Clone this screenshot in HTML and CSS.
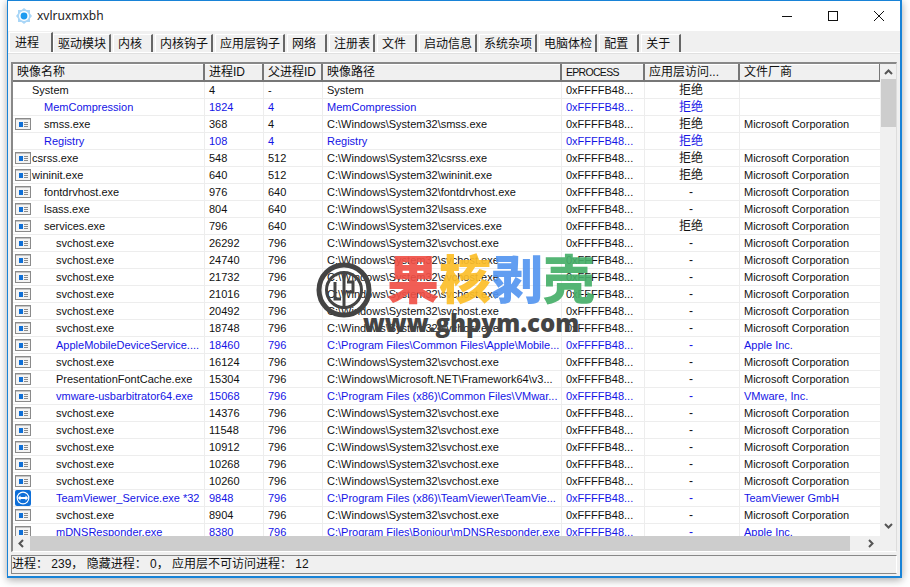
FILE: index.html
```html
<!DOCTYPE html>
<html lang="zh-CN">
<head>
  <meta charset="utf-8">
  <meta name="viewport" content="width=device-width, initial-scale=1">
  <title>xvlruxmxbh</title>
  <link rel="stylesheet" href="styles.css">
</head>
<body>

  <svg class="defs" width="0" height="0">
    <symbol id="appIcon" viewBox="0 0 16 12">
      <rect x="0.5" y="0.5" width="15" height="11" fill="#f4f4f4" stroke="#8a8a8a"/>
      <rect x="1" y="1" width="14" height="1" fill="#c4c4c4"/>
      <rect x="4" y="4" width="4" height="5" fill="#0f6fd6"/>
      <rect x="9" y="4" width="4" height="1" fill="#8a8a8a"/>
      <rect x="9" y="6" width="4" height="1" fill="#8a8a8a"/>
      <rect x="9" y="8" width="4" height="1" fill="#8a8a8a"/>
    </symbol>
  </svg>

  <div class="window">

    <div class="titleBar">
      <svg class="appLogo" width="16" height="16" viewBox="0 0 16 16">
        <path d="M8 0 L10.5 2 L14 2 L14 5.5 L16 8 L14 10.5 L14 14 L10.5 14 L8 16 L5.5 14 L2 14 L2 10.5 L0 8 L2 5.5 L2 2 L5.5 2 Z" fill="#a9d6f7"/>
        <circle cx="8" cy="8" r="5" fill="#fff"/>
        <circle cx="8" cy="8" r="3.4" fill="#1e9bf0"/>
      </svg>
      <span class="titleText">xvlruxmxbh</span>
      <div class="winButtons">
        <svg width="12" height="12" viewBox="0 0 12 12"><path d="M1 6.5 H11" stroke="#111" fill="none"/></svg>
        <svg width="12" height="12" viewBox="0 0 12 12"><rect x="1.5" y="1.5" width="9" height="9" stroke="#111" fill="none"/></svg>
        <svg width="12" height="12" viewBox="0 0 12 12"><path d="M1 1 L11 11 M11 1 L1 11" stroke="#111" fill="none"/></svg>
      </div>
    </div>

    <div class="tabs">
      <div class="tab active">进程</div>
      <div class="tab">驱动模块</div>
      <div class="tab">内核</div>
      <div class="tab">内核钩子</div>
      <div class="tab">应用层钩子</div>
      <div class="tab">网络</div>
      <div class="tab">注册表</div>
      <div class="tab">文件</div>
      <div class="tab">启动信息</div>
      <div class="tab">系统杂项</div>
      <div class="tab">电脑体检</div>
      <div class="tab">配置</div>
      <div class="tab">关于</div>
    </div>

    <div class="panel">
      <div class="listBox">
        <div class="listMain">
          <div class="listClip">
            <table class="procTable">
              <colgroup>
                <col class="colName"><col class="colPid"><col class="colPpid"><col class="colPath"><col class="colEproc"><col class="colAccess"><col class="colVendor">
              </colgroup>
              <thead>
                <tr><th>映像名称</th><th>进程ID</th><th>父进程ID</th><th>映像路径</th><th class="thEproc">EPROCESS</th><th>应用层访问...</th><th>文件厂商</th></tr>
              </thead>
              <tbody>
                <tr><td class="lvl1">System</td><td>4</td><td>-</td><td>System</td><td>0xFFFFB48...</td><td class="mid">拒绝</td><td></td></tr>
                <tr class="blue"><td class="lvl2">MemCompression</td><td>1824</td><td>4</td><td>MemCompression</td><td>0xFFFFB48...</td><td class="mid">拒绝</td><td></td></tr>
                <tr><td class="lvl2"><svg class="ico"><use href="#appIcon"/></svg>smss.exe</td><td>368</td><td>4</td><td>C:\Windows\System32\smss.exe</td><td>0xFFFFB48...</td><td class="mid">拒绝</td><td>Microsoft Corporation</td></tr>
                <tr class="blue"><td class="lvl2">Registry</td><td>108</td><td>4</td><td>Registry</td><td>0xFFFFB48...</td><td class="mid">拒绝</td><td></td></tr>
                <tr><td class="lvl1"><svg class="ico"><use href="#appIcon"/></svg>csrss.exe</td><td>548</td><td>512</td><td>C:\Windows\System32\csrss.exe</td><td>0xFFFFB48...</td><td class="mid">拒绝</td><td>Microsoft Corporation</td></tr>
                <tr><td class="lvl1"><svg class="ico"><use href="#appIcon"/></svg>wininit.exe</td><td>640</td><td>512</td><td>C:\Windows\System32\wininit.exe</td><td>0xFFFFB48...</td><td class="mid">拒绝</td><td>Microsoft Corporation</td></tr>
                <tr><td class="lvl2"><svg class="ico"><use href="#appIcon"/></svg>fontdrvhost.exe</td><td>976</td><td>640</td><td>C:\Windows\System32\fontdrvhost.exe</td><td>0xFFFFB48...</td><td class="mid">-</td><td>Microsoft Corporation</td></tr>
                <tr><td class="lvl2"><svg class="ico"><use href="#appIcon"/></svg>lsass.exe</td><td>804</td><td>640</td><td>C:\Windows\System32\lsass.exe</td><td>0xFFFFB48...</td><td class="mid">-</td><td>Microsoft Corporation</td></tr>
                <tr><td class="lvl2"><svg class="ico"><use href="#appIcon"/></svg>services.exe</td><td>796</td><td>640</td><td>C:\Windows\System32\services.exe</td><td>0xFFFFB48...</td><td class="mid">拒绝</td><td>Microsoft Corporation</td></tr>
                <tr><td class="lvl3"><svg class="ico"><use href="#appIcon"/></svg>svchost.exe</td><td>26292</td><td>796</td><td>C:\Windows\System32\svchost.exe</td><td>0xFFFFB48...</td><td class="mid">-</td><td>Microsoft Corporation</td></tr>
                <tr><td class="lvl3"><svg class="ico"><use href="#appIcon"/></svg>svchost.exe</td><td>24740</td><td>796</td><td>C:\Windows\System32\svchost.exe</td><td>0xFFFFB48...</td><td class="mid">-</td><td>Microsoft Corporation</td></tr>
                <tr><td class="lvl3"><svg class="ico"><use href="#appIcon"/></svg>svchost.exe</td><td>21732</td><td>796</td><td>C:\Windows\System32\svchost.exe</td><td>0xFFFFB48...</td><td class="mid">-</td><td>Microsoft Corporation</td></tr>
                <tr><td class="lvl3"><svg class="ico"><use href="#appIcon"/></svg>svchost.exe</td><td>21016</td><td>796</td><td>C:\Windows\System32\svchost.exe</td><td>0xFFFFB48...</td><td class="mid">-</td><td>Microsoft Corporation</td></tr>
                <tr><td class="lvl3"><svg class="ico"><use href="#appIcon"/></svg>svchost.exe</td><td>20492</td><td>796</td><td>C:\Windows\System32\svchost.exe</td><td>0xFFFFB48...</td><td class="mid">-</td><td>Microsoft Corporation</td></tr>
                <tr><td class="lvl3"><svg class="ico"><use href="#appIcon"/></svg>svchost.exe</td><td>18748</td><td>796</td><td>C:\Windows\System32\svchost.exe</td><td>0xFFFFB48...</td><td class="mid">-</td><td>Microsoft Corporation</td></tr>
                <tr class="blue"><td class="lvl3"><svg class="ico"><use href="#appIcon"/></svg>AppleMobileDeviceService....</td><td>18460</td><td>796</td><td>C:\Program Files\Common Files\Apple\Mobile...</td><td>0xFFFFB48...</td><td class="mid">-</td><td>Apple Inc.</td></tr>
                <tr><td class="lvl3"><svg class="ico"><use href="#appIcon"/></svg>svchost.exe</td><td>16124</td><td>796</td><td>C:\Windows\System32\svchost.exe</td><td>0xFFFFB48...</td><td class="mid">-</td><td>Microsoft Corporation</td></tr>
                <tr><td class="lvl3"><svg class="ico"><use href="#appIcon"/></svg>PresentationFontCache.exe</td><td>15304</td><td>796</td><td>C:\Windows\Microsoft.NET\Framework64\v3...</td><td>0xFFFFB48...</td><td class="mid">-</td><td>Microsoft Corporation</td></tr>
                <tr class="blue"><td class="lvl3"><svg class="ico"><use href="#appIcon"/></svg>vmware-usbarbitrator64.exe</td><td>15068</td><td>796</td><td>C:\Program Files (x86)\Common Files\VMwar...</td><td>0xFFFFB48...</td><td class="mid">-</td><td>VMware, Inc.</td></tr>
                <tr><td class="lvl3"><svg class="ico"><use href="#appIcon"/></svg>svchost.exe</td><td>14376</td><td>796</td><td>C:\Windows\System32\svchost.exe</td><td>0xFFFFB48...</td><td class="mid">-</td><td>Microsoft Corporation</td></tr>
                <tr><td class="lvl3"><svg class="ico"><use href="#appIcon"/></svg>svchost.exe</td><td>11548</td><td>796</td><td>C:\Windows\System32\svchost.exe</td><td>0xFFFFB48...</td><td class="mid">-</td><td>Microsoft Corporation</td></tr>
                <tr><td class="lvl3"><svg class="ico"><use href="#appIcon"/></svg>svchost.exe</td><td>10912</td><td>796</td><td>C:\Windows\System32\svchost.exe</td><td>0xFFFFB48...</td><td class="mid">-</td><td>Microsoft Corporation</td></tr>
                <tr><td class="lvl3"><svg class="ico"><use href="#appIcon"/></svg>svchost.exe</td><td>10268</td><td>796</td><td>C:\Windows\System32\svchost.exe</td><td>0xFFFFB48...</td><td class="mid">-</td><td>Microsoft Corporation</td></tr>
                <tr><td class="lvl3"><svg class="ico"><use href="#appIcon"/></svg>svchost.exe</td><td>10260</td><td>796</td><td>C:\Windows\System32\svchost.exe</td><td>0xFFFFB48...</td><td class="mid">-</td><td>Microsoft Corporation</td></tr>
                <tr class="blue"><td class="lvl3"><svg class="ico tv" viewBox="0 0 16 16"><rect width="16" height="16" rx="2" fill="#0e6fd8"/><circle cx="8" cy="8" r="6.4" fill="#fff"/><circle cx="8" cy="8" r="5.2" fill="#0e6fd8"/><path d="M2.8 8 L5.5 5.6 V7 H10.5 V5.6 L13.2 8 L10.5 10.4 V9 H5.5 V10.4 Z" fill="#fff"/></svg>TeamViewer_Service.exe *32</td><td>9848</td><td>796</td><td>C:\Program Files (x86)\TeamViewer\TeamVie...</td><td>0xFFFFB48...</td><td class="mid">-</td><td>TeamViewer GmbH</td></tr>
                <tr><td class="lvl3"><svg class="ico"><use href="#appIcon"/></svg>svchost.exe</td><td>8904</td><td>796</td><td>C:\Windows\System32\svchost.exe</td><td>0xFFFFB48...</td><td class="mid">-</td><td>Microsoft Corporation</td></tr>
                <tr class="blue"><td class="lvl3"><svg class="ico"><use href="#appIcon"/></svg>mDNSResponder.exe</td><td>8380</td><td>796</td><td>C:\Program Files\Bonjour\mDNSResponder.exe</td><td>0xFFFFB48...</td><td class="mid">-</td><td>Apple Inc.</td></tr>
              </tbody>
            </table>
          </div>
          <div class="vScroll">
            <svg width="9" height="6" viewBox="0 0 9 6"><path d="M1 5 L4.5 1.5 L8 5" stroke="#555" stroke-width="2" fill="none"/></svg>
            <div class="vThumb"></div>
            <svg class="downArrow" width="9" height="6" viewBox="0 0 9 6"><path d="M1 1 L4.5 4.5 L8 1" stroke="#555" stroke-width="2" fill="none"/></svg>
          </div>
        </div>
        <div class="hScroll">
          <svg width="6" height="9" viewBox="0 0 6 9"><path d="M5 1 L1.5 4.5 L5 8" stroke="#555" stroke-width="2" fill="none"/></svg>
          <div class="hThumb"></div>
          <svg width="6" height="9" viewBox="0 0 6 9"><path d="M1 1 L4.5 4.5 L1 8" stroke="#555" stroke-width="2" fill="none"/></svg>
        </div>
      </div>
    </div>

    <div class="statusBar">进程： 239， 隐藏进程： 0， 应用层不可访问进程： 12</div>

    <div class="watermark">
      <svg class="wmLogo" width="56" height="56" viewBox="0 0 56 56">
        <circle cx="28" cy="28" r="25" fill="none" stroke="#444" stroke-width="5"/>
        <circle cx="28" cy="28" r="17.5" fill="none" stroke="#444" stroke-width="3"/>
        <path d="M28 11 V45 M19 20 V37 H25 M31 20 H37 V30 H31" fill="none" stroke="#444" stroke-width="3"/>
      </svg>
      <div class="wmBrand"><span class="wmRed">果</span><span class="wmYellow">核</span><span class="wmBlue">剥</span><span class="wmGreen">壳</span></div>
      <div class="wmUrl">www.ghpym.com</div>
    </div>

  </div>

</body>
</html>
```

FILE: styles.css
```css
html, body {
  margin: 0;
  height: 100%;
  overflow: hidden;
}

body {
  background: #fff;
  font-family: "Liberation Sans", "Noto Sans CJK SC", sans-serif;
  font-size: 11px;
  color: #111;
}

.defs {
  display: block;
  height: 0;
}

.window {
  position: relative;
  box-sizing: border-box;
  display: flex;
  flex-direction: column;
  width: 895px;
  height: 578px;
  margin-left: 7px;
  background: #f0f0f0;
  border: 1px solid #1883d7;
  border-right-width: 2px;
  border-bottom-width: 2px;
  box-shadow: 0 2px 8px rgba(0, 0, 0, 0.35);
}

/* title bar */
.titleBar {
  display: flex;
  align-items: center;
  height: 30px;
  flex: none;
  background: #fff;
  padding-left: 8px;
}

.appLogo {
  margin-right: 5px;
}

.titleText {
  font-family: "Noto Sans", sans-serif;
  font-size: 12px;
  color: #222;
  margin-top: -1px;
}

.winButtons {
  display: flex;
  gap: 34px;
  margin-left: auto;
  margin-right: 15px;
  margin-top: -1px;
}

/* tabs */
.tabs {
  display: flex;
  align-items: flex-end;
  gap: 2px;
  height: 21px;
  flex: none;
  padding-left: 1px;
  font-size: 12px;
}

.tab {
  box-sizing: border-box;
  height: 18px;
  line-height: 19px;
  padding: 0 3px 0 4px;
  min-width: 40px;
  border-top: 1px solid #fff;
  border-left: 1px solid #fff;
  border-right: 2px solid #666;
}

.tab.active {
  height: 20px;
  line-height: 20px;
  margin-right: -2px;
  padding: 0 12px 0 5px;
  background: #f0f0f0;
}

/* process list */
.panel {
  flex: 1;
  min-height: 0;
  display: flex;
  padding: 9px 3px 3px 3px;
  border-top: 1px solid #fff;
  box-shadow: inset 0 1px 0 #e0e0e0;
}

.listBox {
  flex: 1;
  min-width: 0;
  display: flex;
  flex-direction: column;
  border-top: 2px solid #888;
  border-left: 2px solid #888;
  border-right: 1px solid #ddd;
  border-bottom: 1px solid #fff;
}

.listMain {
  flex: 1;
  min-height: 0;
  display: flex;
}

.listClip {
  flex: 1;
  min-width: 0;
  overflow: hidden;
  background: #fff;
}

.procTable {
  table-layout: fixed;
  border-collapse: separate;
  border-spacing: 0;
  width: 868px;
}

.colName { width: 192px; }
.colPid { width: 59px; }
.colPpid { width: 59px; }
.colPath { width: 239px; }
.colEproc { width: 83px; }
.colAccess { width: 95px; }
.colVendor { width: 141px; }

.procTable th {
  height: 16px;
  padding: 0 0 0 4px;
  font-weight: normal;
  font-size: 12px;
  line-height: 16px;
  text-align: left;
  white-space: nowrap;
  overflow: hidden;
  background: #f0f0f0;
  border-right: 2px solid #777;
  border-bottom: 2px solid #777;
  box-shadow: inset 0 1px 0 #fff;
}

.procTable th.thEproc {
  font-size: 10.5px;
  letter-spacing: -0.7px;
}

.procTable td {
  position: relative;
  height: 16px;
  padding: 0 0 0 4px;
  line-height: 16px;
  white-space: nowrap;
  overflow: hidden;
  border-right: 1px solid #ededed;
  border-bottom: 1px solid #ededed;
}

.procTable tbody tr:first-child td {
  height: 15px;
}

.blue td {
  color: #1414e6;
}

.procTable .mid {
  padding: 0 2px 0 0;
  text-align: center;
  font-size: 12px;
}

.procTable .lvl1 { padding-left: 19px; }
.procTable .lvl2 { padding-left: 31px; }
.procTable .lvl3 { padding-left: 43px; }

.ico {
  position: absolute;
  left: 2px;
  top: 2px;
  width: 16px;
  height: 12px;
}

.ico.tv {
  top: 0;
  height: 16px;
}

/* scrollbars */
.vScroll {
  display: flex;
  flex-direction: column;
  align-items: center;
  width: 16px;
  flex: none;
  padding-top: 5px;
}

.vThumb {
  width: 15px;
  height: 48px;
  margin-top: 4px;
  background: #cdcdcd;
}

.downArrow {
  margin-top: auto;
  margin-bottom: 7px;
}

.hScroll {
  display: flex;
  align-items: center;
  justify-content: space-between;
  height: 15px;
  flex: none;
  padding: 0 22px 0 5px;
}

.hThumb {
  flex: 1;
  height: 15px;
  margin: 0 18px 0 6px;
  background: #cdcdcd;
}

/* status bar */
.statusBar {
  box-sizing: border-box;
  height: 19px;
  flex: none;
  margin: 0 3px 2px 3px;
  line-height: 17px;
  font-size: 12px;
  border-top: 1px solid #888;
  border-left: 1px solid #888;
  border-right: 1px solid #fff;
  border-bottom: 1px solid #888;
}

/* watermark sits on top of the list */
.watermark {
  position: absolute;
  left: 308px;
  top: 249px;
  width: 290px;
  height: 90px;
}

.wmLogo {
  position: absolute;
  left: 0;
  top: 12px;
}

.wmBrand {
  position: absolute;
  left: 71px;
  top: -11px;
  white-space: nowrap;
  font-family: "Noto Sans CJK SC", sans-serif;
  font-weight: 900;
  font-size: 52px;
  line-height: 76px;
}

.wmRed { color: rgba(240, 80, 70, 0.92); }
.wmYellow { color: rgba(252, 190, 40, 0.92); }
.wmBlue { color: rgba(85, 150, 240, 0.92); }
.wmGreen { color: rgba(70, 175, 105, 0.92); }

.wmUrl {
  position: absolute;
  left: 47px;
  top: 58px;
  white-space: nowrap;
  font-family: "Open Sans", sans-serif;
  font-weight: 800;
  font-size: 24px;
  line-height: 30px;
  color: #444;
}
```
